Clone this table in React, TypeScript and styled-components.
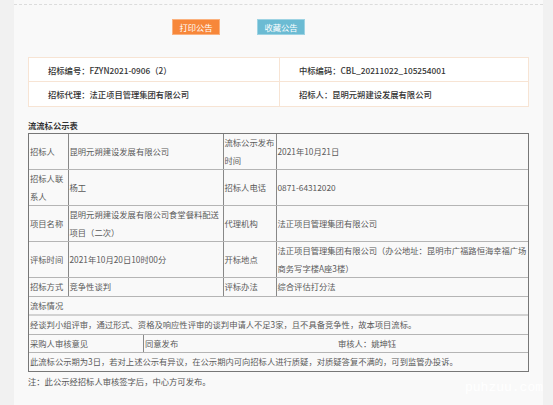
import React from "react";
import styled, { createGlobalStyle } from "styled-components";

const GlobalStyle = createGlobalStyle`
  html, body { margin: 0; padding: 0; }
  body {
    background: #f1f1f1;
    font-family: "Noto Sans CJK SC", "Noto Sans", sans-serif;
  }
`;

const Page = styled.div`
  position: relative;
  height: 405px;
  padding: 0 10px 0 14px;
  overflow: hidden;
`;

const Main = styled.div`
  height: 100%;
  background: #f9f9f9;
  padding-top: 4px;
  box-sizing: border-box;
`;

const DashedRule = styled.div`
  border-top: 1px dashed #dcdcdc;
`;

const ButtonRow = styled.div`
  display: flex;
  gap: 37px;
  margin-top: 14px;
  padding-left: 158px;
`;

const ActionButton = styled.button<{ $tone: "orange" | "blue" }>`
  width: 48px;
  height: 16px;
  padding: 0;
  border: 1px solid ${(p) => (p.$tone === "orange" ? "#fbb27f" : "#9ed3e3")};
  background: ${(p) => (p.$tone === "orange" ? "#f7873a" : "#6bbbd3")};
  color: #fff;
  font-family: inherit;
  font-size: 8.3px;
  line-height: 14px;
  cursor: pointer;
`;

const InfoBox = styled.div`
  margin: 22px 0 0 14px;
  width: 501px;
  box-sizing: border-box;
  background: #fff;
  border: 1px solid #f7e4d4;
  display: grid;
  grid-template-columns: 250px 1fr;
`;

const InfoCell = styled.div<{ $right?: boolean; $second?: boolean }>`
  height: ${(p) => (p.$second ? 24 : 23)}px;
  display: flex;
  align-items: center;
  padding-left: 19px;
  border-left: ${(p) => (p.$right ? "1px solid #f7e4d4" : "0")};
  border-top: ${(p) => (p.$second ? "1px solid #f7e4d4" : "0")};
  font-size: 8.3px;
  font-weight: 500;
  color: #333;
  white-space: nowrap;
`;

const SectionTitle = styled.div`
  margin: 11px 0 1px 14px;
  font-size: 8.3px;
  line-height: 14px;
  font-weight: 700;
  color: #333;
`;

const Frame = styled.div`
  margin-left: 14px;
  width: 501px;
  box-sizing: border-box;
  border: 1px solid #777;
`;

const Table = styled.table`
  width: 100%;
  border-collapse: collapse;
  table-layout: fixed;
  font-size: 8.3px;
  line-height: 17.5px;
  color: #5a5a5a;

  td {
    padding: 0 1px;
    vertical-align: middle;
    border-top: 1px solid #b5b5b5;
    border-bottom: 1px solid #b5b5b5;
    border-left: 1px solid #888;
    border-right: 1px solid #888;
    word-break: break-all;
  }
  tr:first-child td { border-top: 0; }
  tr:last-child td { border-bottom: 0; }
  td:first-child { border-left: 0; }
  td:last-child { border-right: 0; }
`;

const SituationRow = styled.tr`
  td { border-bottom: 2px solid #d2d2d2; }
`;

const ReviewCell = styled.td`
  && { padding: 0; }
`;

const ReviewRow = styled.div`
  display: flex;
`;

const ReviewLabel = styled.div`
  width: 113px;
  padding-left: 1px;
  border-right: 1px solid #888;
`;

const ReviewValue = styled.div`
  width: 193px;
  padding-left: 1px;
`;

const Reviewer = styled.div`
  flex: 1;
`;

const Note = styled.div`
  margin: 2px 0 0 14px;
  font-size: 8.3px;
  line-height: 14px;
  color: #555;
`;

const Watermark = styled.div`
  position: absolute;
  right: 10px;
  top: 379px;
  font-family: "Liberation Mono", monospace;
  font-size: 13px;
  line-height: 18px;
  color: #ffffff;
`;

export default function App() {
  return (
    <>
      <GlobalStyle />
      <Page>
        <Main>
          <DashedRule />
          <ButtonRow>
            <ActionButton $tone="orange">打印公告</ActionButton>
            <ActionButton $tone="blue">收藏公告</ActionButton>
          </ButtonRow>
          <InfoBox>
            <InfoCell>招标编号：FZYN2021-0906（2）</InfoCell>
            <InfoCell $right>中标编码：CBL_20211022_105254001</InfoCell>
            <InfoCell $second>招标代理：法正项目管理集团有限公司</InfoCell>
            <InfoCell $right $second>招标人：昆明元朔建设发展有限公司</InfoCell>
          </InfoBox>
          <SectionTitle>流流标公示表</SectionTitle>
          <Frame>
            <Table>
              <colgroup>
                <col style={{ width: 39 }} />
                <col style={{ width: 155 }} />
                <col style={{ width: 53 }} />
                <col />
              </colgroup>
              <tbody>
                <tr>
                  <td>招标人</td>
                  <td>昆明元朔建设发展有限公司</td>
                  <td>流标公示发布时间</td>
                  <td>2021年10月21日</td>
                </tr>
                <tr>
                  <td>招标人联系人</td>
                  <td>杨工</td>
                  <td>招标人电话</td>
                  <td>0871-64312020</td>
                </tr>
                <tr>
                  <td>项目名称</td>
                  <td>昆明元朔建设发展有限公司食堂餐料配送项目（二次）</td>
                  <td>代理机构</td>
                  <td>法正项目管理集团有限公司</td>
                </tr>
                <tr>
                  <td>评标时间</td>
                  <td>2021年10月20日10时00分</td>
                  <td>开标地点</td>
                  <td>法正项目管理集团有限公司（办公地址：昆明市广福路恒海幸福广场商务写字楼A座3楼）</td>
                </tr>
                <tr>
                  <td>招标方式</td>
                  <td>竞争性谈判</td>
                  <td>评标办法</td>
                  <td>综合评估打分法</td>
                </tr>
                <SituationRow>
                  <td colSpan={4}>流标情况</td>
                </SituationRow>
                <tr>
                  <td colSpan={4}>
                    经谈判小组评审，通过形式、资格及响应性评审的谈判申请人不足3家，且不具备竞争性，故本项目流标。
                  </td>
                </tr>
                <tr>
                  <ReviewCell colSpan={4}>
                    <ReviewRow>
                      <ReviewLabel>采购人审核意见</ReviewLabel>
                      <ReviewValue>同意发布</ReviewValue>
                      <Reviewer>审核人：姚坤钰</Reviewer>
                    </ReviewRow>
                  </ReviewCell>
                </tr>
                <tr>
                  <td colSpan={4}>
                    此流标公示期为3日，若对上述公示有异议，在公示期内可向招标人进行质疑，对质疑答复不满的，可到监管办投诉。
                  </td>
                </tr>
              </tbody>
            </Table>
          </Frame>
          <Note>注：此公示经招标人审核签字后，中心方可发布。</Note>
        </Main>
        <Watermark>puhzuu.com</Watermark>
      </Page>
    </>
  );
}
